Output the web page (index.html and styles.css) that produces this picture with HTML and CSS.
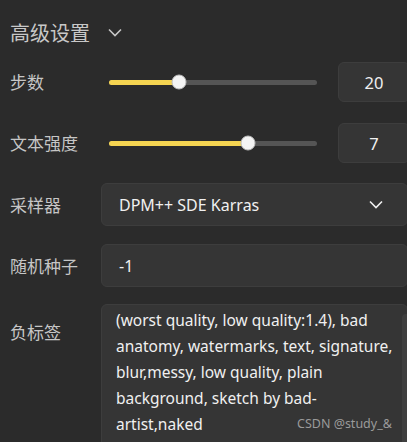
FILE: index.html
```html
<!DOCTYPE html>
<html lang="zh">
<head>
<meta charset="utf-8">
<link rel="stylesheet" href="styles.css">
</head>
<body>
<div class="panel">
  <div class="header">
    <span class="title">高级设置</span>
    <svg class="chev" width="14" height="9" viewBox="0 0 14 9"><path d="M1 1.5 L7 7.5 L13 1.5" fill="none" stroke="#c6c6c6" stroke-width="1.6"/></svg>
  </div>

  <div class="row row-steps">
    <div class="label">步数</div>
    <div class="slider"><div class="track"><div class="fill" style="width:33.7%"></div><div class="thumb" style="left:33.7%"></div></div></div>
    <div class="num">20</div>
  </div>

  <div class="row row-cfg">
    <div class="label">文本强度</div>
    <div class="slider"><div class="track"><div class="fill" style="width:66.8%"></div><div class="thumb" style="left:66.8%"></div></div></div>
    <div class="num">7</div>
  </div>

  <div class="row row-sampler">
    <div class="label">采样器</div>
    <div class="box select">
      <span>DPM++ SDE Karras</span>
      <svg class="sel-chev" width="14" height="9" viewBox="0 0 14 9"><path d="M1 1.5 L7 7.5 L13 1.5" fill="none" stroke="#f0f0f0" stroke-width="1.6"/></svg>
    </div>
  </div>

  <div class="row row-seed">
    <div class="label">随机种子</div>
    <div class="box input">-1</div>
  </div>

  <div class="row row-neg">
    <div class="label neg-label">负标签</div>
    <div class="box textarea">
      <div class="ta-text">(worst quality, low quality:1.4), bad
anatomy, watermarks, text, signature,
blur,messy, low quality, plain
background, sketch by bad-
artist,naked</div>
      <div class="scrollbar"></div>
    </div>
  </div>
</div>
<div class="watermark">CSDN @study_&amp;</div>
</body>
</html>
```

FILE: styles.css
```css
html, body {
  margin: 0;
  padding: 0;
  background: #2b2b2b;
  overflow: hidden;
  width: 407px;
  height: 442px;
}
body {
  font-family: "Noto Sans", "Noto Sans CJK SC", sans-serif;
  color: #c6c6c6;
  position: relative;
}
.panel {
  padding-left: 10px;
  width: 420px;
}
.header {
  display: flex;
  align-items: center;
  height: 26px;
  margin-top: 20px;
}
.title {
  font-family: "Noto Sans CJK SC", sans-serif;
  font-size: 20px;
  line-height: 26px;
  color: #c8c8c8;
}
.chev {
  margin-left: 18px;
  margin-top: -2px;
}
.row {
  display: flex;
  align-items: center;
}
.row-steps { margin-top: 16px; height: 40px; }
.row-cfg { margin-top: 21px; height: 40px; }
.row-sampler { margin-top: 20px; height: 43px; }
.row-seed { margin-top: 18px; height: 43px; }
.row-neg { margin-top: 17px; align-items: flex-start; }
.label {
  width: 91px;
  flex: none;
  font-family: "Noto Sans CJK SC", sans-serif;
  font-size: 17px;
  line-height: 24px;
  color: #c6c6c6;
}
.slider {
  width: 208px;
  margin-left: 8px;
  flex: none;
}
.track {
  position: relative;
  height: 5px;
  border-radius: 3px;
  background: #555555;
}
.fill {
  height: 5px;
  border-radius: 3px;
  background: #f5d451;
}
.thumb {
  position: absolute;
  top: 50%;
  width: 13px;
  height: 13px;
  border-radius: 50%;
  background: #f4f4f4;
  border: 1px solid #bdbdbd;
  transform: translate(-50%, -50%);
}
.num {
  margin-left: 21px;
  width: 70px;
  height: 38px;
  flex: none;
  display: flex;
  align-items: center;
  justify-content: center;
  background: #353535;
  border: 1px solid #3d3d3d;
  border-radius: 6px;
  color: #f0f0f0;
  font-size: 16.5px;
}
.box {
  flex: none;
  width: 307px;
  background: #353535;
  border: 1px solid #3d3d3d;
  border-radius: 6px;
  color: #f0f0f0;
  font-size: 16px;
  box-sizing: border-box;
}
.select, .input {
  height: 43px;
  display: flex;
  align-items: center;
  padding-left: 17px;
}
.select span { flex: 1; }
.sel-chev { margin-right: 24px; }
.neg-label { margin-top: 16px; }
.textarea {
  position: relative;
  height: 150px;
  padding: 2px 15px 0 14px;
  overflow: hidden;
}
.ta-text {
  white-space: pre;
  line-height: 26px;
  font-size: 15.5px;
}
.scrollbar {
  position: absolute;
  left: 300px;
  top: 9px;
  width: 8px;
  height: 140px;
  border-radius: 4px;
  background: #3f3f3f;
}
.watermark {
  position: absolute;
  left: 297px;
  top: 415px;
  font-family: "Noto Sans", sans-serif;
  font-size: 12.5px;
  color: #9a9a9a;
}
```
